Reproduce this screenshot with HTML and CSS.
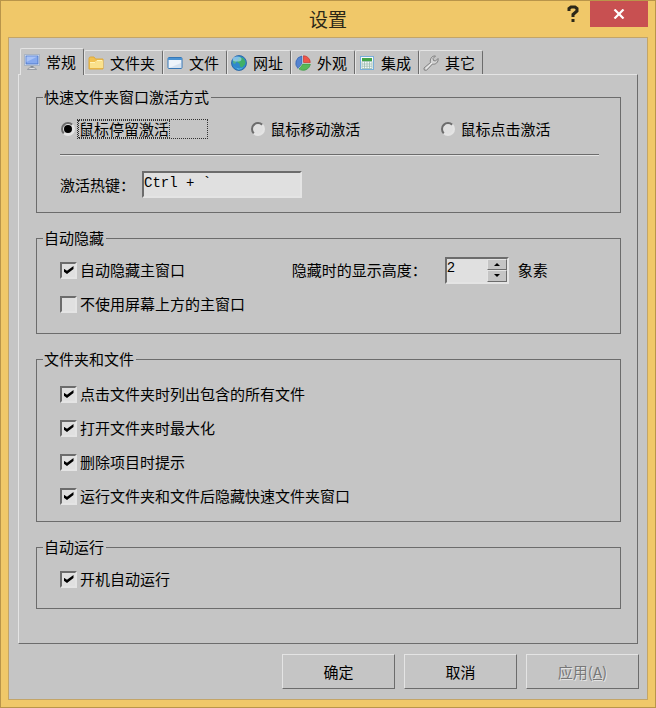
FILE: index.html
```html
<!DOCTYPE html>
<html lang="zh-CN">
<head>
    <meta charset="UTF-8">
    <meta name="viewport" content="width=device-width, initial-scale=1.0">
    <title>设置</title>
    <link rel="stylesheet" href="styles.css">
</head>
<body>
    <div class="window">
        <header class="titlebar">
            <h1>设置</h1>
            <div class="window-buttons">
                <button type="button" class="help" aria-label="帮助">
                    <svg width="12" height="18" viewBox="0 0 12 18"><path d="M2 6V3.500L4 2h4l2 1.500V6L6 9.500V12M6 14v3" fill="none" stroke="#2b2718" stroke-width="3"/></svg>
                </button>
                <button type="button" class="close" aria-label="关闭">
                    <svg width="12" height="10" viewBox="0 0 12 10"><path d="M1.500 .5l9 9M10.500 .5l-9 9" stroke="#fff" stroke-width="2.200"/></svg>
                </button>
            </div>
        </header>

        <form class="client">
            <div class="tabs" role="tablist">
                <button type="button" role="tab" class="tab active" aria-selected="true">
                    <svg width="16" height="16" viewBox="0 0 16 16">
                        <rect x=".5" y=".5" width="15" height="11" fill="#eef2f7" stroke="#a9b4c3"/>
                        <rect x="2" y="2" width="12" height="8" fill="#86a9ee" stroke="#4f78c9"/>
                        <path d="M2.500 2.500h11L2.500 8z" fill="#a9c3f6"/>
                        <path d="M6.500 12h3v2h-3z" fill="#858c95"/>
                        <path d="M3.500 15.500c0-2.500 9-2.500 9 0z" fill="#f0f0f0" stroke="#858c95" stroke-width=".8"/>
                    </svg>
                    常规
                </button>
                <button type="button" role="tab" class="tab">
                    <svg width="16" height="16" viewBox="0 0 16 16">
                        <path d="M1 14V3.500Q1 2 2.500 2H6l1.500 2H15v10z" fill="#f1c04f" stroke="#dda93c"/>
                        <path d="M2 13V8h5l2-2h6v7z" fill="#fae18c"/>
                        <path d="M2 7.500h5l2-2h5.500" fill="none" stroke="#fff3b9"/>
                    </svg>
                    文件夹
                </button>
                <button type="button" role="tab" class="tab">
                    <svg width="16" height="16" viewBox="0 0 16 16">
                        <rect x="1" y="2.500" width="14" height="11" rx="1" fill="#edf4fb" stroke="#3677b6"/>
                        <path d="M1 3h14v2H1z" fill="#4a93d3"/>
                        <path d="M2 13h12V8z" fill="#d5e2f0"/>
                    </svg>
                    文件
                </button>
                <button type="button" role="tab" class="tab">
                    <svg width="16" height="16" viewBox="0 0 16 16">
                        <circle cx="8" cy="8" r="7.500" fill="#2f88cc" stroke="#2260a0" stroke-width=".8"/>
                        <path d="M8 2l4 1 2.500 3.500-.5 3-3 3-2-1-.5-3L6 7l1-3z" fill="#3faf68"/>
                        <path d="M2 5l3-1 1 2-2 3-2-1z" fill="#4fae8e"/>
                        <ellipse cx="6" cy="4" rx="4.500" ry="2.600" fill="#a5d6f4" opacity=".7"/>
                        <path d="M3 11q5 5 9 1-2 3-5 2.500z" fill="#62c9ec"/>
                    </svg>
                    网址
                </button>
                <button type="button" role="tab" class="tab">
                    <svg width="16" height="16" viewBox="0 0 16 16">
                        <circle cx="8" cy="8" r="7.500" fill="#f0f0f0"/>
                        <path d="M7 8.500L3 13.500A7.300 7.300 0 0 1 7 1z" fill="#5484d0" stroke="#315fa9" stroke-width=".7"/>
                        <path d="M8.500 7.500V.7A7 7 0 0 1 15.300 7.500z" fill="#ef5549" stroke="#bd302b" stroke-width=".7"/>
                        <path d="M8 9H15.300A7.200 7.200 0 0 1 4 14z" fill="#58b957" stroke="#32913b" stroke-width=".7"/>
                    </svg>
                    外观
                </button>
                <button type="button" role="tab" class="tab">
                    <svg width="16" height="16" viewBox="0 0 16 16">
                        <rect x="1.500" y="1.500" width="13" height="13" fill="#f7fafc" stroke="#78aeda"/>
                        <path d="M3 3h10v3H3z" fill="#43a549"/>
                        <path d="M3 6.500h10v7H3zM3 9h10M3 11.200h10M5.500 6v7.500M8 6v7.500M10.500 6v7.500" fill="none" stroke="#9cbcae" stroke-width=".8"/>
                    </svg>
                    集成
                </button>
                <button type="button" role="tab" class="tab">
                    <svg width="16" height="16" viewBox="0 0 16 16">
                        <path d="M1 13L7.500 7.500C6.500 4 9 .5 12.500 1L10 3.500l.5 2 2 .5L15 3.500c.8 3.500-2.500 6.500-5.500 5.500L3.500 15.300Q.3 16 1 13z" fill="#d5d5d5" stroke="#777" stroke-width=".9"/>
                        <path d="M3 13.500L9 8" stroke="#f3f3f3"/>
                    </svg>
                    其它
                </button>
            </div>

            <div class="panel" role="tabpanel">
                <fieldset>
                    <legend>快速文件夹窗口激活方式</legend>
                    <div class="group activate">
                        <div class="radios">
                            <label class="option focused"><input type="radio" name="activate" checked><span class="focus-area"><span>鼠标停留激活</span></span></label>
                            <label class="option"><input type="radio" name="activate">鼠标移动激活</label>
                            <label class="option"><input type="radio" name="activate">鼠标点击激活</label>
                        </div>
                        <hr>
                        <div class="hotkey">
                            <label for="hotkey">激活热键：</label>
                            <input type="text" id="hotkey" class="field" value="Ctrl + `">
                        </div>
                    </div>
                </fieldset>

                <fieldset>
                    <legend>自动隐藏</legend>
                    <div class="group">
                        <div class="row hide-row">
                            <label class="option"><input type="checkbox" checked>自动隐藏主窗口</label>
                            <div class="height-setting">
                                <label for="height">隐藏时的显示高度：</label>
                                <div class="spinner">
                                    <input type="number" id="height" value="2">
                                    <div class="spin-buttons">
                                        <button type="button" aria-label="增加"><svg width="6" height="3" viewBox="0 0 6 3"><path d="M0 3l3-3 3 3z"/></svg></button>
                                        <button type="button" aria-label="减少"><svg width="6" height="3" viewBox="0 0 6 3"><path d="M0 0l3 3 3-3z"/></svg></button>
                                    </div>
                                </div>
                                <span>象素</span>
                            </div>
                        </div>
                        <div class="row">
                            <label class="option"><input type="checkbox">不使用屏幕上方的主窗口</label>
                        </div>
                    </div>
                </fieldset>

                <fieldset>
                    <legend>文件夹和文件</legend>
                    <div class="group files">
                        <div class="row"><label class="option"><input type="checkbox" checked>点击文件夹时列出包含的所有文件</label></div>
                        <div class="row"><label class="option"><input type="checkbox" checked>打开文件夹时最大化</label></div>
                        <div class="row"><label class="option"><input type="checkbox" checked>删除项目时提示</label></div>
                        <div class="row"><label class="option"><input type="checkbox" checked>运行文件夹和文件后隐藏快速文件夹窗口</label></div>
                    </div>
                </fieldset>

                <fieldset>
                    <legend>自动运行</legend>
                    <div class="group">
                        <div class="row"><label class="option"><input type="checkbox" checked>开机自动运行</label></div>
                    </div>
                </fieldset>
            </div>

            <div class="actions">
                <button type="button">确定</button>
                <button type="button">取消</button>
                <button type="button" disabled>应用(<u>A</u>)</button>
            </div>
        </form>
    </div>
</body>
</html>
```
FILE: styles.css
```css
* {
    box-sizing: border-box;
}
body {
    margin: 0;
    font: 15px/22px "Noto Sans CJK SC", sans-serif;
    color: #000;
}
button, input {
    font: inherit;
    color: inherit;
    margin: 0;
    padding: 0;
    border: 0;
}
svg {
    display: block;
    flex: none;
}

/* window frame */
.window {
    min-height: 100vh;
    display: flex;
    flex-direction: column;
    padding: 0 7px 7px;
    border: 1px solid #b9954a;
    background: #f0c869;
}
.titlebar {
    display: grid;
    grid-template-columns: 1fr auto 1fr;
    height: 36px;
}
.titlebar h1 {
    grid-column: 2;
    margin: 0;
    font-size: 19px;
    font-weight: 400;
    line-height: 36px;
    color: #2b2718;
}
.window-buttons {
    display: flex;
    justify-content: flex-end;
    align-items: flex-start;
}
.help {
    padding: 4px 11px;
    background: none;
}
.close {
    display: flex;
    align-items: center;
    justify-content: center;
    width: 58px;
    height: 26px;
    background: #c85051;
}
.client {
    flex: 1;
    padding: 10px 8px 9px 9px;
    border: 1px solid #c3a568;
    background: #c5c5c5;
}

/* tabs */
.tabs {
    display: flex;
    align-items: flex-end;
    padding-left: 2px;
}
.tab {
    display: flex;
    align-items: center;
    gap: 6px;
    height: 24px;
    padding: 0 7px 0 3px;
    border: 1px solid #e4e4e4;
    border-right-color: #6c6c6c;
    border-bottom: 0;
    border-radius: 2px 2px 0 0;
    background: #c5c5c5;
    white-space: nowrap;
}
.tab.active {
    height: 27px;
    margin-bottom: -1px;
    z-index: 1;
}
.panel {
    display: grid;
    gap: 14px;
    padding: 11px 16px 34px 17px;
    margin-right: 1px;
    border: 1px solid #e4e4e4;
    border-right-color: #6c6c6c;
    border-bottom-color: #6c6c6c;
}

/* groups */
fieldset {
    min-width: 0;
    margin: 0;
    padding: 0 6px;
    border: 1px solid #6c6c6c;
}
legend {
    padding: 0 2px 0 1px;
}
.group {
    padding: 4px 15px 12px 17px;
}
.activate {
    padding-top: 10px;
    padding-bottom: 14px;
}
.files {
    padding-top: 7px;
    padding-bottom: 8px;
}
.row {
    display: flex;
    align-items: center;
    height: 34px;
}
.option {
    display: flex;
    align-items: center;
    gap: 3px;
}
.option input {
    appearance: none;
    flex: none;
    display: grid;
    place-items: center;
    width: 17px;
    height: 17px;
    border: 2px solid;
    border-color: #6c6c6c #e4e4e4 #e4e4e4 #6c6c6c;
    background: #e0e0e0;
}
.option input[type="radio"] {
    width: 14px;
    height: 14px;
    margin: 0 2px 0 1px;
    border-radius: 50%;
}
.option input:checked::before {
    content: "";
    width: 10px;
    height: 8px;
    background: #000;
    clip-path: polygon(0 30%, 35% 60%, 100% 0, 100% 38%, 35% 100%, 0 70%);
}
.option input[type="radio"]:checked::before {
    width: 8px;
    height: 8px;
    border-radius: 50%;
    clip-path: none;
}
.radios {
    display: grid;
    grid-template-columns: 6fr 6fr 5fr;
    height: 20px;
}
.focused {
    gap: 0;
    padding-right: 42px;
}
.focus-area {
    flex: 1;
    border: 1px dotted #333;
    line-height: 18px;
}
.focus-area span {
    display: inline-block;
    padding: 0 1px;
    outline: 1px dotted #333;
    outline-offset: -1px;
}
hr {
    margin: 16px 0 15px;
    border: 0;
    border-top: 1px solid #6c6c6c;
    border-bottom: 1px solid #e4e4e4;
}
.hotkey {
    display: flex;
    align-items: center;
    gap: 7px;
}
.field, .spinner {
    height: 27px;
    border: 2px solid;
    border-color: #6c6c6c #e4e4e4 #e4e4e4 #6c6c6c;
    background: #e0e0e0;
}
.field, .spinner input {
    padding-bottom: 4px;
    font: 14px/18px "Liberation Mono", monospace;
}
.field {
    width: 160px;
}
.hide-row {
    display: grid;
    grid-template-columns: 43% 1fr;
}
.height-setting {
    display: flex;
    align-items: center;
}
.spinner {
    display: flex;
    width: 64px;
    margin: 0 9px 0 18px;
}
.spinner input {
    flex: 1;
    min-width: 0;
    background: none;
    appearance: textfield;
}
.spinner input::-webkit-inner-spin-button {
    appearance: none;
}
.spin-buttons {
    display: grid;
    width: 20px;
}
.spin-buttons button {
    display: grid;
    place-items: center;
    border: 1px solid;
    border-color: #e4e4e4 #6c6c6c #6c6c6c #e4e4e4;
    background: #c5c5c5;
}

/* bottom buttons */
.actions {
    display: flex;
    justify-content: flex-end;
    gap: 9px;
    padding-top: 10px;
}
.actions button {
    width: 113px;
    height: 35px;
    border: 1px solid;
    border-color: #e4e4e4 #6c6c6c #6c6c6c #e4e4e4;
    background: #c5c5c5;
}
.actions button:disabled {
    color: #777;
    text-shadow: 1px 1px #e4e4e4;
}
```
